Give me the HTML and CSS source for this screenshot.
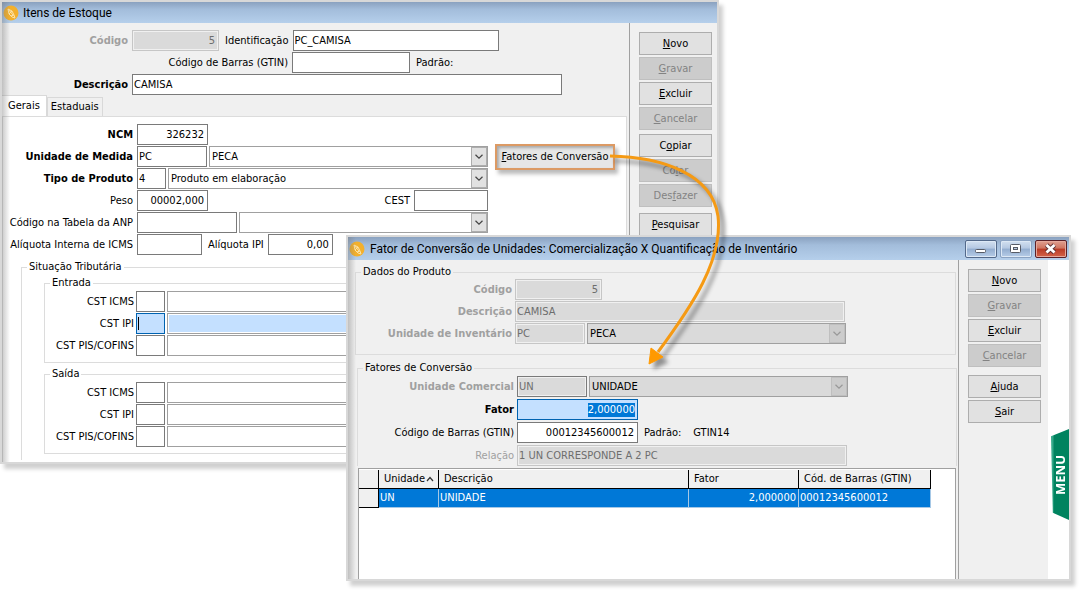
FILE: index.html
```html
<!DOCTYPE html>
<html lang="pt-BR">
<head>
<meta charset="utf-8">
<title>Itens de Estoque</title>
<link rel="stylesheet" href="styles.css">
</head>
<body>
<svg class="symbols" aria-hidden="true">
  <symbol id="app" viewBox="0 0 16 16">
    <circle cx="8" cy="8" r="7.500" fill="#f3b02c"/>
    <path d="M5 4l1 5 3 3 3 1-1-3-2-4-4-2M5 4l5 6M6 9l3-3M8 11l3-1" fill="none" stroke="#fbe3a8" stroke-width="1"/>
  </symbol>
  <symbol id="chevron" viewBox="0 0 16 18"><path d="M4 7l4 4 4-4" fill="none" stroke="currentColor" stroke-width="1.400"/></symbol>
</svg>

<main class="desktop">
<section class="window window-items">
  <header class="titlebar"><svg class="app-icon"><use href="#app"/></svg><h1 class="title">Itens de Estoque</h1></header>
  <div class="body">
    <div class="content">
      <div class="form form-head">
        <div class="row"><label class="label strong off" for="codigo">Código</label><input class="field w87 right off" id="codigo" value="5" disabled><label class="label-inline" for="ident">Identificação</label><input class="field w206" id="ident" value="PC_CAMISA"></div>
        <div class="row"><label class="label label-far" for="gtin">Código de Barras (GTIN)</label><input class="field w118" id="gtin"><span class="note">Padrão:</span></div>
        <div class="row"><label class="label strong" for="desc">Descrição</label><input class="field w430" id="desc" value="CAMISA"></div>
      </div>
      <div class="tabs" role="tablist"><button class="tab active" role="tab">Gerais</button><button class="tab" role="tab">Estaduais</button></div>
      <div class="panel">
        <div class="form form-panel">
          <div class="row"><label class="label strong" for="ncm">NCM</label><input class="field w71 right" id="ncm" value="326232"></div>
          <div class="row"><label class="label strong" for="unid">Unidade de Medida</label><input class="field w70" id="unid" value="PC"><span class="combo fill"><select aria-label="Unidade de Medida"><option>PECA</option></select><svg><use href="#chevron"/></svg></span><button class="factor"><u>F</u>atores de Conversão</button></div>
          <div class="row"><label class="label strong" for="tipo">Tipo de Produto</label><input class="field w29" id="tipo" value="4"><span class="combo fill"><select aria-label="Tipo de Produto"><option>Produto em elaboração</option></select><svg><use href="#chevron"/></svg></span></div>
          <div class="row"><label class="label" for="peso">Peso</label><input class="field w71 right" id="peso" value="00002,000"><label class="label-inline push" for="cest">CEST</label><input class="field w74" id="cest"></div>
          <div class="row"><label class="label" for="anp">Código na Tabela da ANP</label><input class="field w100" id="anp"><span class="combo fill"><select aria-label="Tabela da ANP"></select><svg><use href="#chevron"/></svg></span></div>
          <div class="row"><label class="label" for="icms">Alíquota Interna de ICMS</label><input class="field w65" id="icms"><label class="label-inline" for="ipi">Alíquota IPI</label><input class="field w65 right" id="ipi" value="0,00"></div>
        </div>
        <fieldset class="group taxes"><legend>Situação Tributária</legend>
          <fieldset class="group tax"><legend>Entrada</legend>
            <div class="row"><label class="label" for="e1">CST ICMS</label><input class="field w29" id="e1"><span class="combo grow"><select aria-label="Entrada CST ICMS"></select></span></div>
            <div class="row"><label class="label" for="e2">CST IPI</label><span class="field w29 focus caret-box"><i class="caret"></i><input id="e2"></span><span class="combo grow focus-combo"><select aria-label="Entrada CST IPI"></select></span></div>
            <div class="row"><label class="label" for="e3">CST PIS/COFINS</label><input class="field w29" id="e3"><span class="combo grow"><select aria-label="Entrada CST PIS/COFINS"></select></span></div>
          </fieldset>
          <fieldset class="group tax"><legend>Saída</legend>
            <div class="row"><label class="label" for="s1">CST ICMS</label><input class="field w29" id="s1"><span class="combo grow"><select aria-label="Saída CST ICMS"></select></span></div>
            <div class="row"><label class="label" for="s2">CST IPI</label><input class="field w29" id="s2"><span class="combo grow"><select aria-label="Saída CST IPI"></select></span></div>
            <div class="row"><label class="label" for="s3">CST PIS/COFINS</label><input class="field w29" id="s3"><span class="combo grow"><select aria-label="Saída CST PIS/COFINS"></select></span></div>
          </fieldset>
        </fieldset>
      </div>
    </div>
    <nav class="side">
      <div class="actions"><button><u>N</u>ovo</button><button disabled><u>G</u>ravar</button><button><u>E</u>xcluir</button><button disabled><u>C</u>ancelar</button></div>
      <div class="actions"><button>C<u>o</u>piar</button><button disabled>Co<u>l</u>ar</button><button disabled>Des<u>f</u>azer</button></div>
      <div class="actions"><button><u>P</u>esquisar</button></div>
    </nav>
  </div>
</section>

<section class="window window-factor">
  <header class="titlebar"><svg class="app-icon"><use href="#app"/></svg><h2 class="title">Fator de Conversão de Unidades: Comercialização X Quantificação de Inventário</h2>
    <div class="controls">
      <button class="ctl" aria-label="Minimizar"><svg viewBox="0 0 29 16"><rect x="9.500" y="8.500" width="10" height="3" rx="1" fill="#fff" stroke="#565b66"/></svg></button>
      <button class="ctl dim" aria-label="Maximizar"><svg viewBox="0 0 29 16"><rect x="9.500" y="3.500" width="10" height="8" rx="1" fill="#fff" stroke="#565b66"/><rect x="12.500" y="6.500" width="4" height="2" fill="#b9cbe2" stroke="#565b66"/></svg></button>
      <button class="ctl close" aria-label="Fechar"><svg viewBox="0 0 29 16"><path d="M10.500 4l8 7.500M18.500 4l-8 7.500" stroke="#5b3034" stroke-width="4.500"/><path d="M10.500 4l8 7.500M18.500 4l-8 7.500" stroke="#fff" stroke-width="2.800"/></svg></button>
    </div>
  </header>
  <div class="body">
    <div class="content">
      <fieldset class="group product"><legend>Dados do Produto</legend>
        <div class="row"><label class="label strong off" for="p1">Código</label><input class="field w87 right off" id="p1" value="5" disabled></div>
        <div class="row"><label class="label strong off" for="p2">Descrição</label><input class="field w330 off" id="p2" value="CAMISA" disabled></div>
        <div class="row"><label class="label strong off" for="p3">Unidade de Inventário</label><input class="field w70 off" id="p3" value="PC" disabled><span class="combo w259 combo-off"><select aria-label="Unidade de Inventário" disabled><option>PECA</option></select><svg><use href="#chevron"/></svg></span></div>
      </fieldset>
      <fieldset class="group factors"><legend>Fatores de Conversão</legend>
        <div class="row"><label class="label strong off" for="f1">Unidade Comercial</label><input class="field w70 off edge" id="f1" value="UN" disabled><span class="combo w259 combo-off"><select aria-label="Unidade Comercial" disabled><option>UNIDADE</option></select><svg><use href="#chevron"/></svg></span></div>
        <div class="row"><label class="label strong" for="f2">Fator</label><span class="field w121 focus selected-box"><output class="selected" id="f2">2,000000</output></span></div>
        <div class="row"><label class="label" for="f3">Código de Barras (GTIN)</label><input class="field w121 right" id="f3" value="00012345600012"><span class="note">Padrão:</span><span class="note note-far">GTIN14</span></div>
        <div class="row"><label class="label off" for="f4">Relação</label><input class="field w330 off" id="f4" value="1 UN CORRESPONDE A 2 PC" disabled></div>
      </fieldset>
      <div class="grid-box">
        <table class="grid">
          <colgroup><col class="c-mark"><col class="c-unit"><col class="c-desc"><col class="c-factor"><col class="c-code"></colgroup>
          <thead><tr><th></th><th><span class="sort">Unidade<svg viewBox="0 0 8 6"><path d="M1 5l3-3.500 3 3.500" fill="none" stroke="#333" stroke-width="1.200"/></svg></span></th><th>Descrição</th><th>Fator</th><th>Cód. de Barras (GTIN)</th></tr></thead>
          <tbody><tr><th></th><td>UN</td><td>UNIDADE</td><td class="num">2,000000</td><td>00012345600012</td></tr></tbody>
        </table>
      </div>
    </div>
    <nav class="side">
      <div class="actions"><button><u>N</u>ovo</button><button disabled><u>G</u>ravar</button><button><u>E</u>xcluir</button><button disabled><u>C</u>ancelar</button></div>
      <div class="actions last"><button><u>A</u>juda</button><button><u>S</u>air</button></div>
    </nav>
    <div class="menu-strip"><button class="menu-tab"><span>MENU</span></button></div>
  </div>
</section>

<svg class="arrow" viewBox="0 0 140 240" aria-hidden="true">
  <path d="M10 16C62 17 112 34 118 76C123 120 92 166 58 212" fill="none" stroke="#f59a14" stroke-width="3"/>
  <path d="M49 224L51 208L63 217Z" fill="#f90" stroke="#f90"/>
</svg>
</main>
</body>
</html>
```
FILE: styles.css
```css
* { box-sizing: border-box; }
body { margin: 0; background: #fff; color: #000; font: 11px/14px "DejaVu Sans Condensed", "Open Sans", sans-serif; }
button, input, select { font: inherit; color: inherit; margin: 0; }
.symbols { position: absolute; width: 0; height: 0; }
.desktop { position: relative; min-height: 605px; overflow: hidden; }

/* windows */
.window { position: absolute; background: #f0f0f0; border: 2px solid #d8d8d8; box-shadow: 4px 5px 4px #d0d0d0; display: flex; flex-direction: column; }
.window::after { content: ""; position: absolute; inset: 0 auto 0 0; width: 8px; background: linear-gradient(90deg, #77777766, #aaaaaa00); pointer-events: none; }
.window-items { left: 0; top: 0; right: 369px; }
.window-factor { left: 346px; top: 235px; right: 17px; }
.titlebar { display: flex; align-items: center; height: 21px; padding-left: 1px; gap: 4px; background: linear-gradient(#8aa1bf, #a3bddb 35%, #b5cfeb); }
.window-factor .titlebar { height: 23px; gap: 5px; }
.app-icon { width: 16px; height: 16px; flex: none; }
.title { margin: 0; font: 12px/16px Roboto, sans-serif; flex: 1; white-space: nowrap; }
.controls { display: flex; gap: 3px; padding-right: 2px; }
.ctl { width: 32px; height: 18px; padding: 0; border: 1px solid #53698a; border-radius: 2px; background: linear-gradient(#d3e0f0, #b4c8e2 45%, #93adcf 50%, #b7cde8); box-shadow: inset 0 0 0 1px #dce8f5; }
.ctl svg { display: block; width: 29px; height: 16px; }
.ctl.dim { border-color: #8aa2c2; }
.ctl.close { border-color: #5b2027; background: linear-gradient(#e0a091, #cf7460 45%, #b93a25 50%, #d4644a); box-shadow: inset 0 0 0 1px #e5a89b; }
.body { display: flex; flex: 1; }
.content { flex: 1; min-width: 0; display: flex; flex-direction: column; }
.side { border-left: 1px solid #a0a0a0; padding: 9px 5px 0 9px; display: flex; flex-direction: column; gap: 4px; }
.actions { display: flex; flex-direction: column; gap: 2px; }
.actions button { width: 73px; height: 23px; padding: 0; border: 1px solid #adadad; background: #e1e1e1; }
.actions button:disabled { background: #ccc; border-color: #bfbfbf; color: #838383; }
.side .actions:nth-child(3) { padding-top: 2px; }
.side .actions.last { padding-top: 4px; }
.window-factor .side { padding-right: 7px; }

/* form rows */
.row { display: flex; align-items: center; height: 21px; }
.row + .row { margin-top: 1px; }
.label { flex: none; width: 130px; padding-right: 4px; text-align: right; white-space: nowrap; }
.label-inline { padding: 0 4px 0 6px; white-space: nowrap; }
.strong { font-weight: bold; }
.label.off { color: #a0a0a0; }
.note { padding-left: 6px; white-space: nowrap; }
.note-far { padding-left: 12px; }
.field { flex: none; height: 21px; padding: 0 3px 1px 1px; border: 1px solid #7a7a7a; border-radius: 0; background: #fff; outline: 0; }
.field.off { background: #dadada; border-color: #c6c6c6; box-shadow: inset 0 0 0 1px #f0f0f0; color: #6d6d6d; }
.field.edge { border-color: #7a7a7a; }
.right { text-align: right; }
.focus { background: #c4e0ff; border-color: #0063b1; display: flex; align-items: center; }
.caret { width: 1px; height: 13px; background: #000; flex: none; }
.caret-box input { width: 100%; min-width: 0; border: 0; padding: 0; background: none; outline: 0; }
.selected-box { justify-content: flex-end; padding: 0 2px; }
.selected { background: #0078d7; color: #fff; }
.w29 { width: 29px; } .w65 { width: 65px; } .w70 { width: 70px; } .w71 { width: 71px; }
.w74 { width: 74px; } .w87 { width: 87px; } .w100 { width: 100px; } .w118 { width: 118px; }
.w121 { width: 121px; } .w206 { width: 206px; } .w259 { width: 259px; } .w330 { width: 330px; } .w430 { width: 430px; }
.combo { display: flex; height: 21px; margin-left: 2px; border: 1px solid #a0a0a0; background: #fff; }
.combo select { flex: 1; min-width: 0; appearance: none; border: 0; border-radius: 0; padding: 0 2px; background: none; outline: 0; opacity: 1; color: #000; }
.combo svg { width: 16px; height: 19px; flex: none; background: #e1e1e1; border: 1px solid #adadad; color: #444; }
.combo-off { background: #dadada; }
.combo-off svg { background: #ccc; border-color: #bfbfbf; color: #999; }
.focus-combo select { background: #c4e0ff; margin: 1px; }
.grow { flex: 1; }

/* items window */
.form-head { padding: 7px 0 0; }
.form-head .label-far { width: 290px; }
.tabs { display: flex; align-items: flex-end; height: 21px; }
.tab { height: 19px; padding: 0 3px; border: 1px solid #d9d9d9; border-bottom: 0; background: #f0f0f0; }
.tab.active { height: 21px; padding: 0 6px 1px; border-left: 0; background: #fff; }
.panel { flex: 1; background: #fff; border: 1px solid #dcdcdc; border-bottom: 0; margin-right: 2px; padding: 7px 0 2px; }
.form-panel .label { width: 134px; padding-right: 4px; }
.form-panel .row { width: 485px; }
.form-panel .fill { flex: 1; }
.push { margin-left: auto; }
.factor { flex: none; width: 120px; height: 26px; margin: 0 -127px 0 7px; padding: 0; border: 2px solid #dc9a64; background: #e6e6e6; box-shadow: inset 2px 2px 3px #aaa, 3px 4px 4px #bbb; white-space: nowrap; }
.group { margin: 0; padding: 0; border: 1px solid #dcdcdc; min-width: 0; }
.group legend { padding: 0 2px; margin-left: 5px; line-height: 14px; }
.taxes { margin: 5px 12px 0 18px; padding: 2px 0 6px; border-bottom: 0; }
.tax { margin: 0 12px 0 22px; padding: 1px 6px 6px 0; }
.tax + .tax { margin-top: 4px; }
.tax .label { width: 91px; padding-right: 2px; }

/* factor window */
.product { margin: 5px 2px 0 7px; padding: 0 0 10px; }
.product .label { width: 159px; padding-right: 3px; }
.factors { margin: 6px 1px 0 9px; padding: 1px 0 0; border-bottom: 0; }
.factors .label { width: 159px; padding-right: 3px; }
.factors .row + .row { margin-top: 2px; }
.grid-box { min-height: 111px; margin: 2px 2px 0 10px; padding-top: 1px; border: 1px solid #a0a0a0; border-bottom: 0; background: #fff; }
.grid { table-layout: fixed; width: 572px; border-collapse: separate; border-spacing: 0; }
.c-mark { width: 20px; } .c-unit { width: 60px; } .c-desc { width: 250px; } .c-factor { width: 110px; } .c-code { width: 132px; }
.grid th { height: 19px; padding: 0 0 0 5px; background: #f0f0f0; border-right: 1px solid #000; border-bottom: 1px solid #000; font-weight: normal; text-align: left; white-space: nowrap; }
.grid td { height: 19px; padding: 0 2px 0 1px; background: #0078d7; color: #fff; border-right: 1px solid #a6c8e6; border-bottom: 1px solid #a6c8e6; white-space: nowrap; }
.grid .num { text-align: right; }
.sort { display: flex; align-items: center; gap: 1px; }
.sort svg { width: 8px; height: 6px; flex: none; }
.menu-strip { width: 21px; background: #fff; padding: 169px 0 0 3px; }
.menu-tab { display: flex; align-items: center; justify-content: center; width: 18px; height: 91px; padding: 0; border: 0; background: linear-gradient(90deg, #35a98a 0 2px, #00835f 3px); clip-path: polygon(0 8%, 100% 0, 100% 100%, 10% 92%); color: #fff; font: bold 13px/16px "Open Sans", sans-serif; }
.menu-tab span { writing-mode: vertical-rl; rotate: 180deg; }
.arrow { position: absolute; left: 600px; top: 140px; width: 140px; height: 240px; pointer-events: none; filter: drop-shadow(5px 5px 2px #00000066); }
```
